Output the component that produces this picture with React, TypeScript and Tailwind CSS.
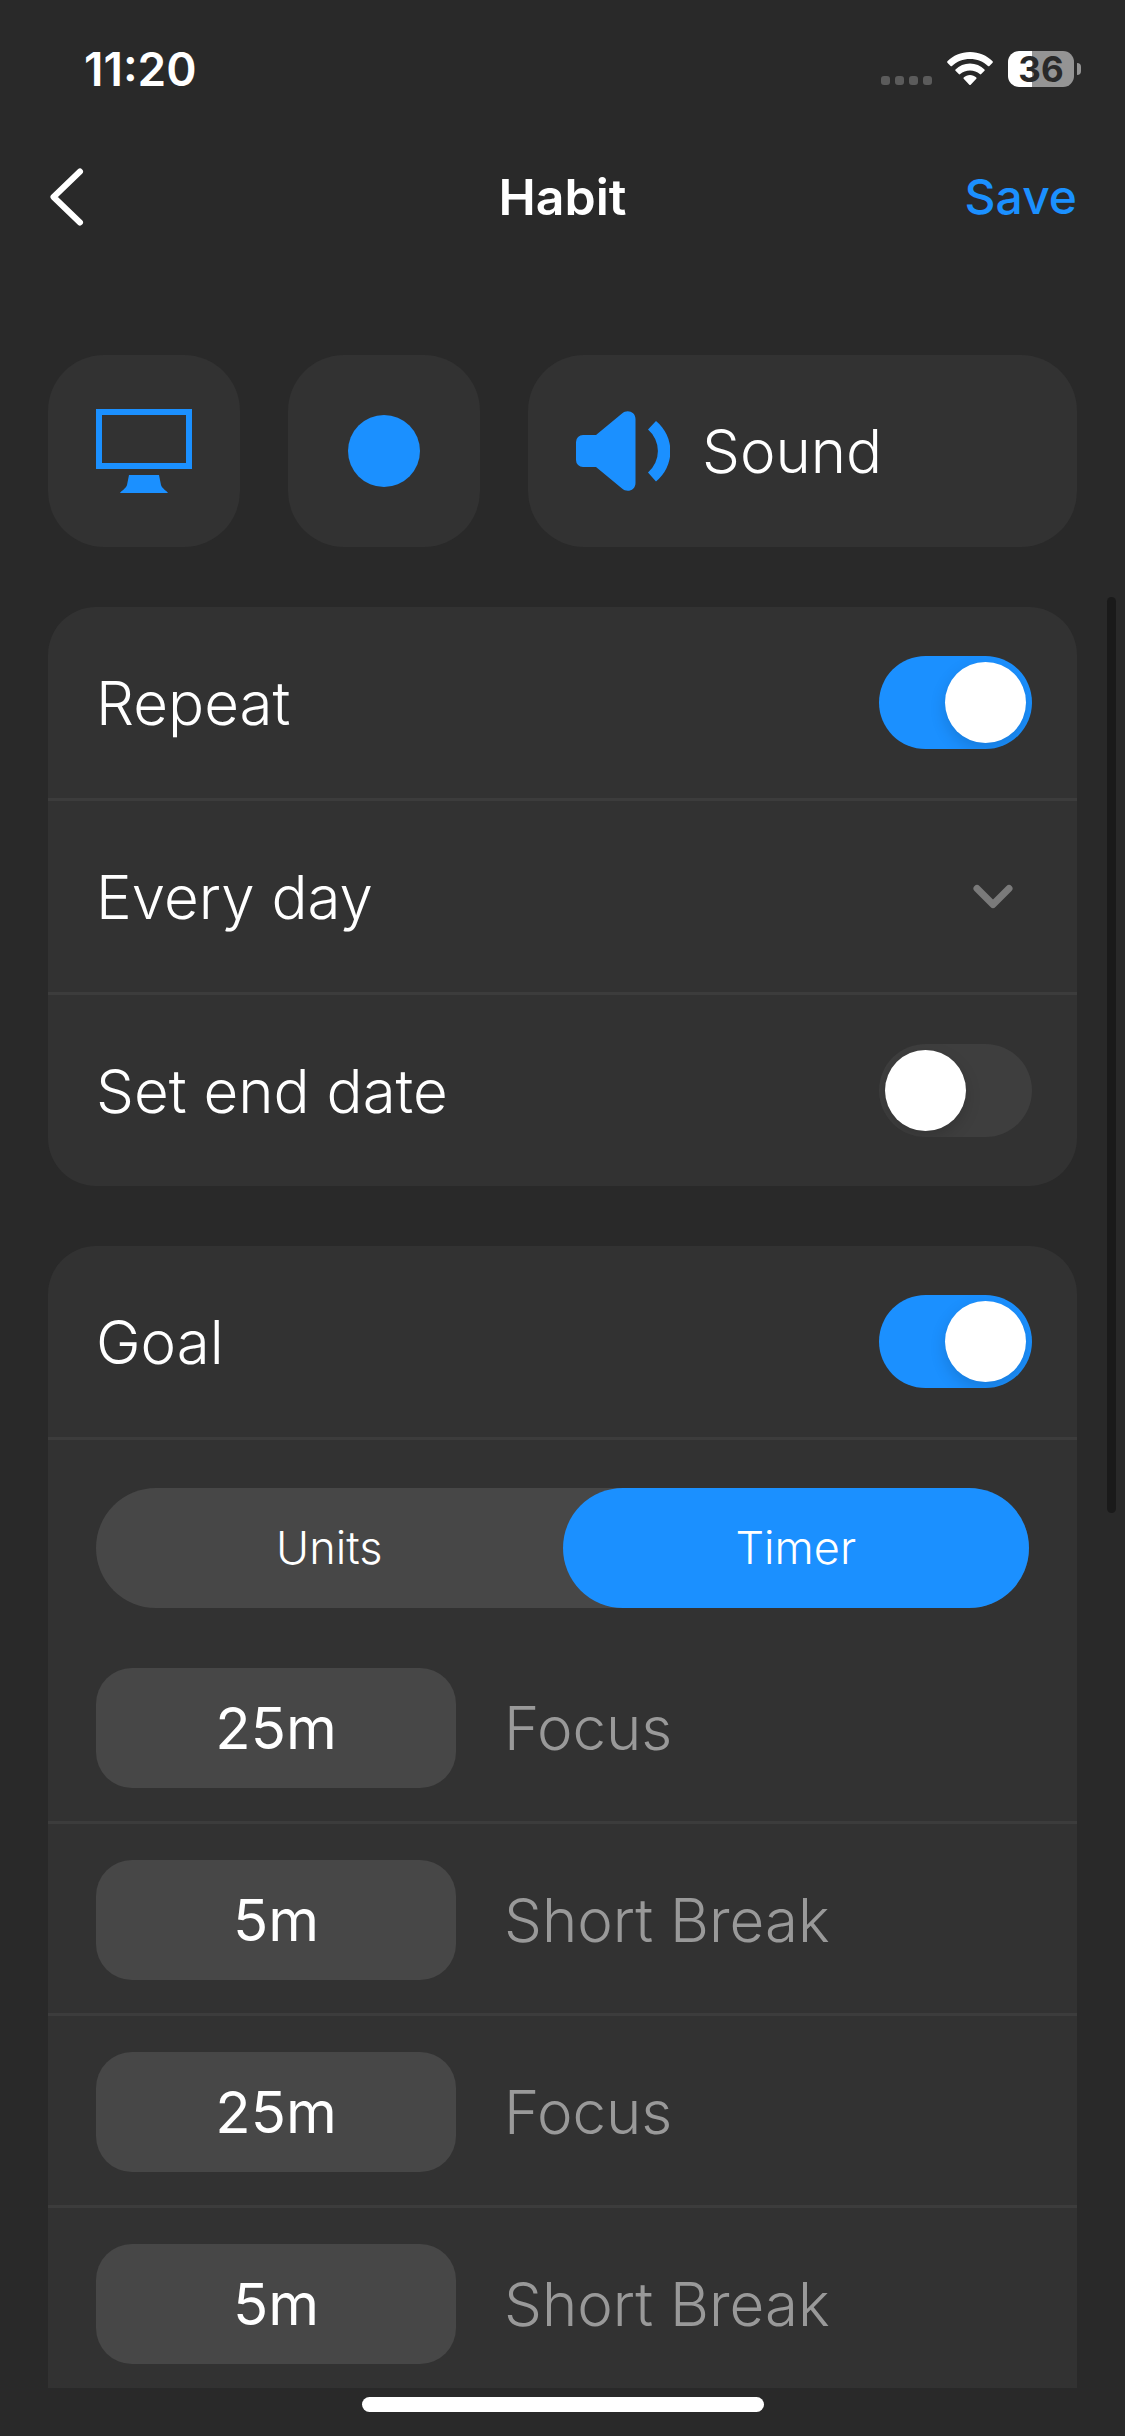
import { useState } from 'react'

const intervals = [
  { id: 'focus-1', label: 'Focus', value: '25m' },
  { id: 'break-1', label: 'Short Break', value: '5m' },
  { id: 'focus-2', label: 'Focus', value: '25m' },
  { id: 'break-2', label: 'Short Break', value: '5m' },
]

function StatusBar() {
  return (
    <div className="h-[138px] pl-[84px] pr-11 flex items-center justify-between">
      <span className="text-[46px] leading-none font-semibold">11:20</span>
      <div className="flex items-center gap-[15px]">
        {/* No signal */}
        <div className="flex gap-[5px] pt-[22px]">
          <span className="size-[9px] rounded-[3px] bg-[#5b5b5b]" />
          <span className="size-[9px] rounded-[3px] bg-[#5b5b5b]" />
          <span className="size-[9px] rounded-[3px] bg-[#5b5b5b]" />
          <span className="size-[9px] rounded-[3px] bg-[#5b5b5b]" />
        </div>
        <svg className="w-[46px] h-[34px]" viewBox="0 0 46 34" fill="currentColor" aria-hidden="true">
          <path d="M23 0C14 0 6 3.6 .4 9.3c-.4.4-.4 1 0 1.4l3.2 3.2c.4.4 1 .4 1.4 0C9.7 9.4 16 6.9 23 6.9s13.3 2.5 18 7c.4.4 1 .4 1.4 0l3.2-3.2c.4-.4.4-1 0-1.4C40 3.6 32 0 23 0z" />
          <path d="M23 11.6c-5.6 0-10.7 2.2-14.5 5.8-.4.4-.4 1 0 1.4l3.3 3.3c.4.4 1 .4 1.4 0 2.6-2.4 6-3.6 9.8-3.6s7.2 1.2 9.8 3.6c.4.4 1 .4 1.4 0l3.3-3.3c.4-.4.4-1 0-1.4-3.8-3.6-8.9-5.8-14.5-5.8z" />
          <path d="M23 23c-2.4 0-4.6.9-6.3 2.4-.4.4-.4 1 0 1.4l5.6 5.9c.4.4 1 .4 1.4 0l5.6-5.9c.4-.4.4-1 0-1.4C27.6 23.9 25.4 23 23 23z" />
        </svg>
        <div className="flex items-center gap-[3px]">
          <div className="w-[66px] h-9 rounded-[11px] bg-linear-to-r from-white from-36% to-[#949494] to-36% flex items-center justify-center text-[#292929] text-[35px] leading-none font-bold">
            36
          </div>
          <div className="w-1 h-3 rounded-r-full bg-[#949494]" />
        </div>
      </div>
    </div>
  )
}

function ToggleRow({ id, label, defaultChecked }: { id: string; label: string; defaultChecked?: boolean }) {
  return (
    <div className="py-[49px] pl-12 pr-[45px] flex items-center justify-between">
      <label htmlFor={id}>{label}</label>
      <input
        id={id}
        type="checkbox"
        role="switch"
        defaultChecked={defaultChecked}
        className="appearance-none shrink-0 w-[153px] h-[93px] p-1.5 overflow-hidden rounded-full bg-[#3e3e3e] checked:bg-[#1b90ff] flex checked:justify-end before:block before:size-[81px] before:rounded-full before:bg-white before:shadow-[0_6px_16px_rgba(0,0,0,0.15)]"
      />
    </div>
  )
}

export default function App() {
  const [mode, setMode] = useState('Timer')

  return (
    <div className="relative min-h-screen flex flex-col bg-[#292929] text-white text-[60px] leading-[70px] font-light font-['Inter',sans-serif]">
      <StatusBar />

      <header className="h-[118px] px-12 grid grid-cols-3 items-center">
        <button aria-label="Back" className="justify-self-start">
          <svg className="w-[38px] h-[60px]" viewBox="0 0 38 60" fill="none" stroke="currentColor" strokeWidth="6" strokeLinecap="round" strokeLinejoin="round">
            <path d="M32 4.5 5.5 30 32 55.5" />
          </svg>
        </button>
        <h1 className="justify-self-center text-[50px] font-semibold">Habit</h1>
        <button className="justify-self-end text-[48px] font-medium text-[#1b90ff]">Save</button>
      </header>

      <main className="px-12 pt-[99px] flex-1 flex flex-col gap-[60px]">
        <div className="flex gap-12">
          <button aria-label="Icon" className="size-48 rounded-[56px] bg-[#323232] flex items-center justify-center">
            <svg className="w-24 h-[84px]" viewBox="0 0 96 84">
              <rect x="3" y="3" width="90" height="54" fill="none" stroke="#1b90ff" strokeWidth="6" />
              <path d="M33 66h30l2 10c.5 3 6 6 7 8H24c1-2 6.500-5 7-8z" fill="#1b90ff" />
            </svg>
          </button>
          <button aria-label="Color" className="size-48 rounded-[56px] bg-[#323232] flex items-center justify-center">
            <span className="size-[72px] rounded-full bg-[#1b90ff]" />
          </button>
          <button className="flex-1 pl-12 rounded-[56px] bg-[#323232] flex items-center gap-8">
            <svg className="w-[94px] h-20" viewBox="0 0 94 80" fill="#1b90ff">
              <path d="M7 24h13L46 2.4C51-2 59.5.5 59.5 8v64c0 7.5-8.5 10-13.5 5.6L20 56H7a7 7 0 0 1-7-7V31a7 7 0 0 1 7-7z" />
              <path d="M80 10a39 39 0 0 1 0 60.5l-8-9a28.3 28.3 0 0 0 0-43z" />
            </svg>
            Sound
          </button>
        </div>

        <section className="rounded-[48px] bg-[#323232] divide-y-3 divide-[#3c3c3c]">
          <ToggleRow id="repeat" label="Repeat" defaultChecked />
          <div className="relative">
            <select aria-label="Repeat interval" className="appearance-none block w-full h-[191px] px-12 bg-transparent">
              <option>Every day</option>
            </select>
            <svg className="absolute right-16 inset-y-0 my-auto w-10 h-[26px] pointer-events-none" viewBox="0 0 40 26" fill="none" stroke="#7a7a7a" strokeWidth="7" strokeLinecap="round" strokeLinejoin="round">
              <path d="M4 4.5 20 20.5 36 4.5" />
            </svg>
          </div>
          <ToggleRow id="end-date" label="Set end date" />
        </section>

        <section className="rounded-t-[48px] bg-[#323232]">
          <div className="border-b-3 border-[#3c3c3c]">
            <ToggleRow id="goal" label="Goal" defaultChecked />
          </div>
          <div className="mx-12 mt-12 mb-6 grid grid-cols-2 rounded-full bg-[#474747]">
            {['Units', 'Timer'].map((name) => (
              <button
                key={name}
                aria-pressed={mode === name}
                onClick={() => setMode(name)}
                className="h-[120px] rounded-full text-[45px] aria-pressed:bg-[#1b90ff]"
              >
                {name}
              </button>
            ))}
          </div>
          {intervals.map(({ id, label, value }) => (
            <div
              key={id}
              className="px-12 pt-9 pb-[33px] flex items-center gap-12 border-b-3 border-[#3c3c3c] last:pb-6 last:border-b-0"
            >
              <input
                id={id}
                defaultValue={value}
                className="w-[360px] h-[120px] rounded-[36px] bg-[#474747] text-center text-[58px] font-normal"
              />
              <label htmlFor={id} className="text-[#999999]">{label}</label>
            </div>
          ))}
        </section>
      </main>

      {/* Home indicator */}
      <footer className="h-12 pt-[9px] flex justify-center">
        <div className="w-[402px] h-[15px] rounded-full bg-white" />
      </footer>

      {/* Scroll position */}
      <div className="absolute right-[9px] top-[597px] w-[9px] h-[916px] rounded-full bg-[#1a1a1a]" />
    </div>
  )
}
